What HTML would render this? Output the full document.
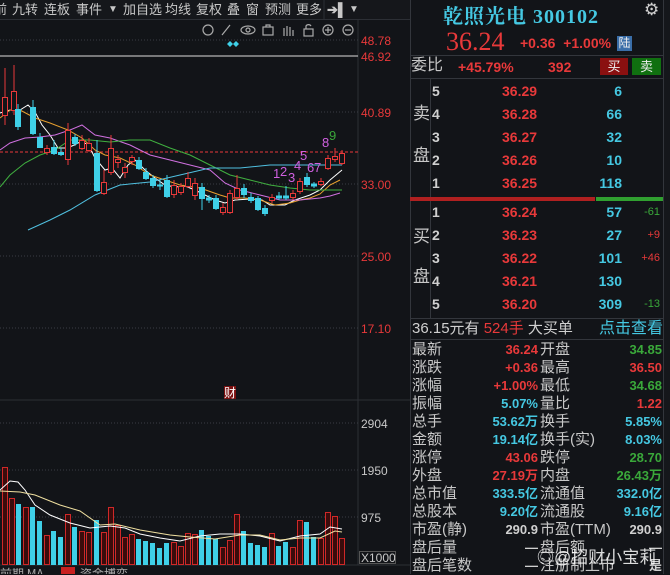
<!DOCTYPE html>
<html><head><meta charset="utf-8"><style>
*{margin:0;padding:0;box-sizing:border-box}
body{width:670px;height:574px;background:#121418;overflow:hidden;position:relative;font-family:"Liberation Sans","Noto Sans CJK SC",sans-serif;color:#c8c8c8}
.a{position:absolute;white-space:nowrap}
.r{color:#e8393a}.c{color:#45c8e2}.g{color:#3aa83a}.w{color:#d0d0d0}
.tb{top:0;left:0;height:20px;width:410px;background:#15171b;border-bottom:1px solid #2c2f35;font-size:13px;line-height:18px;color:#c8c8c8}
.tb span{position:absolute;top:1px}
.lab{font-size:15px;line-height:18px}
.num{font-size:13px;font-weight:bold;line-height:18px}
.ob{font-size:14px;font-weight:bold;line-height:23px}
</style></head><body>
<div class="a tb">
<span style="left:-6px">前</span><span style="left:12px">九转</span><span style="left:44px">连板</span><span style="left:76px">事件</span><span style="left:108px;font-size:10px">▼</span><span style="left:123px">加自选</span><span style="left:165px">均线</span><span style="left:196px">复权</span><span style="left:227px">叠</span><span style="left:246px">窗</span><span style="left:265px">预测</span><span style="left:296px">更多</span><span style="left:327px;font-weight:bold">➔▌</span><span style="left:349px;font-size:10px">▼</span>
</div>
<svg class="a" style="left:0;top:0" width="410" height="574">
<g stroke="#2c2f35" stroke-width="1"><line x1="324" y1="0" x2="324" y2="20"/><line x1="358" y1="20" x2="358" y2="565"/><line x1="0" y1="400" x2="410" y2="400"/><line x1="0" y1="565" x2="410" y2="565"/></g>
<g stroke="#3a3d44" stroke-dasharray="1 2"><line x1="0" y1="40" x2="358" y2="40"/><line x1="0" y1="112" x2="358" y2="112"/><line x1="0" y1="184" x2="358" y2="184"/><line x1="0" y1="256" x2="358" y2="256"/><line x1="0" y1="328" x2="358" y2="328"/><line x1="0" y1="423" x2="358" y2="423"/><line x1="0" y1="470" x2="358" y2="470"/><line x1="0" y1="517" x2="358" y2="517"/></g>
<line x1="0" y1="56" x2="358" y2="56" stroke="#ddd"/>
<line x1="0" y1="152" x2="358" y2="152" stroke="#e8393a" stroke-dasharray="3 2"/>
<g fill="none" stroke="#aaa" stroke-width="1.2"><circle cx="208" cy="30" r="5"/><path d="M222 35l8-10"/><ellipse cx="248" cy="30" rx="7" ry="4"/><circle cx="248" cy="30" r="2"/><rect x="263" y="27" width="10" height="8"/><path d="M266 27v-2h4v2"/><path d="M284 36v-8m3 8v-10m3 10v-9m3 9v-6"/><rect x="304" y="29" width="9" height="7"/><path d="M306 29v-3a3 3 0 0 1 5 0"/><circle cx="328" cy="30" r="5"/><path d="M325 30h6m-3-3v6"/><circle cx="348" cy="30" r="5"/><path d="M345 30h6"/></g>
<g fill="#3fd0e8"><path d="M230 41l3 3-3 3-3-3z"/><path d="M236 41l3 3-3 3-3-3z"/></g>
<g fill="none" stroke-width="1">
<polyline stroke="#fff" points="0,113 10,110 20,110 28,105 35,112 42,125 50,135 58,148 65,148 72,146 80,142 88,144 95,158 105,170 112,168 120,178 128,165 135,160 145,170 155,178 165,185 175,187 185,186 195,190 205,195 215,200 225,203 235,200 250,199 262,200 270,205 285,205 295,200 310,195 320,190 330,180 342,170"/>
<polyline stroke="#e8a030" points="0,118 10,110 20,110 35,118 50,123 68,130 82,138 95,150 105,155 120,158 135,165 150,175 165,180 180,185 200,188 220,195 230,198 245,198 260,200 275,205 290,203 300,200 310,198 320,194 330,185 340,180"/>
<polyline stroke="#d070e0" points="0,150 10,143 25,138 40,137 55,135 70,130 82,125 95,135 110,138 130,145 150,155 170,160 190,165 210,170 225,183 240,190 260,195 280,200 300,200 320,198 330,196 340,193"/>
<polyline stroke="#40b040" points="0,187 10,175 25,163 40,155 55,150 70,140 90,140 110,142 130,140 150,140 170,148 190,155 210,165 230,175 250,180 270,185 290,188 310,190 330,190 342,190"/>
<polyline stroke="#50c0e0" points="28,230 50,220 70,210 95,195 120,185 150,182 180,175 210,168 240,168 270,165 300,165 330,165 342,165"/>
</g>
<g stroke="#e8393a" fill="#121418" stroke-width="1">
<line x1="5" y1="68" x2="5" y2="125"/><rect x="2.5" y="97.5" width="5" height="18"/>
<line x1="14" y1="65" x2="14" y2="115"/><rect x="11.5" y="91.5" width="5" height="19"/>
<line x1="47" y1="145" x2="47" y2="155"/><rect x="44.5" y="148.5" width="5" height="4"/>
<line x1="68" y1="123" x2="68" y2="165"/><rect x="65.5" y="130.5" width="5" height="29"/>
<line x1="82" y1="135" x2="82" y2="150"/><rect x="79.5" y="140.5" width="5" height="8"/>
<line x1="89" y1="138" x2="89" y2="152"/><rect x="86.5" y="143.5" width="5" height="7"/>
<line x1="104" y1="170" x2="104" y2="195"/><rect x="101.5" y="182.5" width="5" height="11"/>
<line x1="111" y1="135" x2="111" y2="175"/><rect x="108.5" y="148.5" width="5" height="24"/>
<line x1="118" y1="155" x2="118" y2="168"/><rect x="115.5" y="159.5" width="5" height="3"/>
<line x1="125" y1="163" x2="125" y2="178"/><rect x="122.5" y="167.5" width="5" height="5"/>
<line x1="132" y1="155" x2="132" y2="165"/><rect x="129.5" y="157.5" width="5" height="4"/>
<line x1="174" y1="180" x2="174" y2="198"/><rect x="171.5" y="185.5" width="5" height="9"/>
<line x1="181" y1="183" x2="181" y2="195"/><rect x="178.5" y="186.5" width="5" height="6"/>
<line x1="188" y1="172" x2="188" y2="188"/><rect x="185.5" y="178.5" width="5" height="8"/>
<line x1="195" y1="178" x2="195" y2="200"/><rect x="192.5" y="183.5" width="5" height="12"/>
<line x1="223" y1="203" x2="223" y2="215"/><rect x="220.5" y="207.5" width="5" height="5"/>
<line x1="230" y1="190" x2="230" y2="214"/><rect x="227.5" y="193.5" width="5" height="19"/>
<line x1="237" y1="175" x2="237" y2="200"/><rect x="234.5" y="188.5" width="5" height="9"/>
<line x1="272" y1="194" x2="272" y2="203"/><rect x="269.5" y="197.5" width="5" height="3"/>
<line x1="293" y1="190" x2="293" y2="200"/><rect x="290.5" y="193.5" width="5" height="4"/>
<line x1="300" y1="178" x2="300" y2="194"/><rect x="297.5" y="181.5" width="5" height="10"/>
<line x1="321" y1="178" x2="321" y2="186"/><rect x="318.5" y="181.5" width="5" height="3"/>
<line x1="328" y1="155" x2="328" y2="170"/><rect x="325.5" y="158.5" width="5" height="10"/>
<line x1="335" y1="148" x2="335" y2="162"/><rect x="332.5" y="156.5" width="5" height="3"/>
<line x1="342" y1="150" x2="342" y2="165"/><rect x="339.5" y="153.5" width="5" height="10"/>
</g>
<g stroke="#3fd0e8" fill="#3fd0e8" stroke-width="1">
<line x1="18" y1="104" x2="18" y2="130"/><rect x="15.5" y="109.5" width="5" height="17"/>
<line x1="33" y1="100" x2="33" y2="135"/><rect x="30.5" y="107.5" width="5" height="26"/>
<line x1="40" y1="133" x2="40" y2="148"/><rect x="37.5" y="137.5" width="5" height="10"/>
<line x1="54" y1="140" x2="54" y2="155"/><rect x="51.5" y="147.5" width="5" height="6"/>
<line x1="61" y1="148" x2="61" y2="156"/><rect x="58.5" y="152.5" width="5" height="2"/>
<line x1="75" y1="134" x2="75" y2="146"/><rect x="72.5" y="137.5" width="5" height="6"/>
<line x1="97" y1="140" x2="97" y2="192"/><rect x="94.5" y="153.5" width="5" height="37"/>
<line x1="139" y1="157" x2="139" y2="170"/><rect x="136.5" y="160.5" width="5" height="8"/>
<line x1="146" y1="168" x2="146" y2="180"/><rect x="143.5" y="172.5" width="5" height="6"/>
<line x1="153" y1="175" x2="153" y2="188"/><rect x="150.5" y="178.5" width="5" height="7"/>
<line x1="160" y1="180" x2="160" y2="190"/><rect x="157.5" y="185" width="5" height="1"/>
<line x1="167" y1="175" x2="167" y2="198"/><rect x="164.5" y="180.5" width="5" height="16"/>
<line x1="202" y1="183" x2="202" y2="210"/><rect x="199.5" y="187.5" width="5" height="11"/>
<line x1="209" y1="195" x2="209" y2="203"/><rect x="206.5" y="198" width="5" height="2"/>
<line x1="216" y1="195" x2="216" y2="210"/><rect x="213.5" y="198.5" width="5" height="10"/>
<line x1="244" y1="184" x2="244" y2="198"/><rect x="241.5" y="188.5" width="5" height="6"/>
<line x1="251" y1="193" x2="251" y2="203"/><rect x="248.5" y="197.5" width="5" height="3"/>
<line x1="258" y1="196" x2="258" y2="211"/><rect x="255.5" y="198.5" width="5" height="11"/>
<line x1="265" y1="205" x2="265" y2="216"/><rect x="262.5" y="208.5" width="5" height="5"/>
<line x1="279" y1="192" x2="279" y2="200"/><rect x="276.5" y="196" width="5" height="2"/>
<line x1="286" y1="186" x2="286" y2="200"/><rect x="283.5" y="196" width="5" height="2"/>
<line x1="307" y1="173" x2="307" y2="187"/><rect x="304.5" y="177.5" width="5" height="7"/>
<line x1="314" y1="182" x2="314" y2="188"/><rect x="311.5" y="184" width="5" height="2"/>
</g>
<g font-family="Liberation Sans" font-size="13"><text x="273" y="178" fill="#d060e0">1</text><text x="280" y="176" fill="#d060e0">2</text><text x="288" y="182" fill="#d060e0">3</text><text x="294" y="170" fill="#d060e0">4</text><text x="300" y="160" fill="#d060e0">5</text><text x="307" y="172" fill="#d060e0">6</text><text x="314" y="172" fill="#d060e0">7</text><text x="322" y="147" fill="#d060e0">8</text><text x="329" y="140" fill="#3aa83a">9</text></g>
<g font-family="Liberation Sans" font-size="12" fill="#e8393a"><text x="361" y="45">48.78</text><text x="361" y="61">46.92</text><text x="361" y="117">40.89</text><text x="361" y="189">33.00</text><text x="361" y="261">25.00</text><text x="361" y="333">17.10</text></g>
<g font-family="Liberation Sans" font-size="12" fill="#c8c8c8"><text x="361" y="428">2904</text><text x="361" y="475">1950</text><text x="361" y="522">975</text><text x="361" y="562">X1000</text></g>
<rect x="359.5" y="551.5" width="36" height="12" fill="none" stroke="#555"/>
<rect x="224" y="386" width="12" height="13" fill="#7a1010"/><text x="224" y="397" font-size="12" fill="#fff" font-family="Noto Sans CJK SC">财</text>
<g stroke="#d02828" fill="#3a0c0c">
<rect x="2.5" y="467.5" width="5" height="97"/><rect x="9.5" y="498.5" width="5" height="66"/><rect x="23.5" y="507.5" width="5" height="57"/><rect x="44.5" y="535.5" width="5" height="29"/><rect x="65.5" y="514.5" width="5" height="50"/><rect x="79.5" y="531.5" width="5" height="33"/><rect x="86.5" y="532.5" width="5" height="32"/><rect x="101.5" y="532.5" width="5" height="32"/><rect x="108.5" y="507.5" width="5" height="57"/><rect x="115.5" y="525.5" width="5" height="39"/><rect x="122.5" y="537.5" width="5" height="27"/><rect x="129.5" y="534.5" width="5" height="30"/><rect x="171.5" y="542.5" width="5" height="22"/><rect x="178.5" y="546.5" width="5" height="18"/><rect x="185.5" y="533.5" width="5" height="31"/><rect x="192.5" y="534.5" width="5" height="30"/><rect x="220.5" y="547.5" width="5" height="17"/><rect x="227.5" y="540.5" width="5" height="24"/><rect x="234.5" y="514.5" width="5" height="50"/><rect x="269.5" y="533.5" width="5" height="31"/><rect x="290.5" y="547.5" width="5" height="17"/><rect x="297.5" y="520.5" width="5" height="44"/><rect x="318.5" y="538.5" width="5" height="26"/><rect x="325.5" y="512.5" width="5" height="52"/><rect x="332.5" y="516.5" width="5" height="48"/><rect x="339.5" y="538.5" width="5" height="26"/>
</g>
<g fill="#3fd0e8">
<rect x="16" y="504" width="5" height="61"/><rect x="30" y="507" width="5" height="58"/><rect x="37" y="521" width="5" height="44"/><rect x="51" y="531" width="5" height="34"/><rect x="58" y="537" width="5" height="28"/><rect x="72" y="527" width="5" height="38"/><rect x="94" y="520" width="5" height="45"/><rect x="136" y="539" width="5" height="26"/><rect x="143" y="541" width="5" height="24"/><rect x="150" y="543" width="5" height="22"/><rect x="157" y="548" width="5" height="17"/><rect x="164" y="543" width="5" height="22"/><rect x="199" y="530" width="5" height="35"/><rect x="206" y="536" width="5" height="29"/><rect x="213" y="539" width="5" height="26"/><rect x="241" y="531" width="5" height="34"/><rect x="248" y="543" width="5" height="22"/><rect x="255" y="545" width="5" height="20"/><rect x="262" y="547" width="5" height="18"/><rect x="276" y="546" width="5" height="19"/><rect x="283" y="542" width="5" height="23"/><rect x="304" y="522" width="5" height="43"/><rect x="311" y="537" width="5" height="28"/>
</g>
<polyline fill="none" stroke="#fff" points="0,490 10,481 18,482 25,490 35,505 50,515 70,523 90,528 110,526 125,528 140,534 160,538 180,541 200,536 220,534 240,534 260,536 280,541 300,536 320,534 330,527 342,529"/>
<polyline fill="none" stroke="#f0e0a0" points="0,491 20,492 35,495 60,505 80,511 100,525 115,524 140,530 170,535 190,537 215,539 240,535 260,535 280,540 300,538 320,538 335,531 342,532"/>
<rect x="0" y="566" width="410" height="8" fill="#121418"/>
<rect x="61" y="567" width="14" height="7" fill="#c82020"/>
<text x="0" y="578" font-size="12" fill="#aaa" font-family="Noto Sans CJK SC">前期 MA</text>
<text x="80" y="578" font-size="12" fill="#aaa" font-family="Noto Sans CJK SC">资金博弈</text>
</svg>
<div class="a" style="left:410px;top:0;width:1px;height:574px;background:#33363c"></div>
<div class="a" style="left:663px;top:0;width:7px;height:574px;background:#15171b;border-left:1px solid #33363c"></div>
<div class="a c" style="left:443px;top:0px;font-size:20px;font-weight:bold;font-family:'Liberation Serif','Noto Serif CJK SC',serif;letter-spacing:1px">乾照光电 300102</div>
<div class="a w" style="left:644px;top:0px;font-size:17px">⚙</div>
<div class="a r" style="left:446px;top:27px;font-size:26px;font-family:'Liberation Serif',serif">36.24</div>
<div class="a r" style="left:520px;top:35px;font-size:14px;font-weight:bold">+0.36&nbsp;&nbsp;+1.00%</div>
<div class="a" style="left:617px;top:36px;width:15px;height:15px;background:#3a6ea8;color:#eee;font-size:12px;line-height:15px;text-align:center">陆</div>
<div class="a" style="left:410px;top:55px;width:254px;height:1px;background:#33363c"></div>
<div class="a lab" style="left:411px;top:57px;font-size:16px">委比</div>
<div class="a r num" style="left:458px;top:58px;font-size:14px">+45.79%</div>
<div class="a r num" style="left:548px;top:58px;font-size:14px">392</div>
<div class="a" style="left:600px;top:58px;width:28px;height:17px;background:#8a1010;color:#eee;font-size:13px;text-align:center;line-height:17px">买</div>
<div class="a" style="left:632px;top:58px;width:29px;height:17px;background:#107010;color:#eee;font-size:13px;text-align:center;line-height:17px">卖</div>
<div class="a" style="left:410px;top:78px;width:254px;height:1px;background:#33363c"></div>
<div class="a" style="left:430px;top:79px;width:1px;height:239px;background:#33363c"></div>
<div class="a lab" style="left:413px;top:105px;font-size:17px">卖</div>
<div class="a lab" style="left:413px;top:147px;font-size:17px">盘</div>
<div class="a lab" style="left:413px;top:228px;font-size:17px">买</div>
<div class="a lab" style="left:413px;top:268px;font-size:17px">盘</div>
<div class="ob" style="position:absolute;left:432px;top:80px;width:230px">
<div style="position:relative;height:23px"><span class="w a" style="left:0">5</span><span class="r a" style="left:70px">36.29</span><span class="c a" style="right:40px">6</span></div>
<div style="position:relative;height:23px"><span class="w a" style="left:0">4</span><span class="r a" style="left:70px">36.28</span><span class="c a" style="right:40px">66</span></div>
<div style="position:relative;height:23px"><span class="w a" style="left:0">3</span><span class="r a" style="left:70px">36.27</span><span class="c a" style="right:40px">32</span></div>
<div style="position:relative;height:23px"><span class="w a" style="left:0">2</span><span class="r a" style="left:70px">36.26</span><span class="c a" style="right:40px">10</span></div>
<div style="position:relative;height:23px"><span class="w a" style="left:0">1</span><span class="r a" style="left:70px">36.25</span><span class="c a" style="right:40px">118</span></div>
</div>
<div class="a" style="left:410px;top:197px;width:185px;height:4px;background:#b02020"></div>
<div class="a" style="left:596px;top:197px;width:67px;height:4px;background:#30a030"></div>
<div class="ob" style="position:absolute;left:432px;top:201px;width:230px">
<div style="position:relative;height:23px"><span class="w a" style="left:0">1</span><span class="r a" style="left:70px">36.24</span><span class="c a" style="right:40px">57</span><span class="g a" style="right:2px;font-size:11px;font-weight:normal">-61</span></div>
<div style="position:relative;height:23px"><span class="w a" style="left:0">2</span><span class="r a" style="left:70px">36.23</span><span class="c a" style="right:40px">27</span><span class="r a" style="right:2px;font-size:11px;font-weight:normal">+9</span></div>
<div style="position:relative;height:23px"><span class="w a" style="left:0">3</span><span class="r a" style="left:70px">36.22</span><span class="c a" style="right:40px">101</span><span class="r a" style="right:2px;font-size:11px;font-weight:normal">+46</span></div>
<div style="position:relative;height:23px"><span class="w a" style="left:0">4</span><span class="r a" style="left:70px">36.21</span><span class="c a" style="right:40px">130</span></div>
<div style="position:relative;height:23px"><span class="w a" style="left:0">5</span><span class="r a" style="left:70px">36.20</span><span class="c a" style="right:40px">309</span><span class="g a" style="right:2px;font-size:11px;font-weight:normal">-13</span></div>
</div>
<div class="a" style="left:410px;top:318px;width:254px;height:1px;background:#33363c"></div>
<div class="a" style="left:412px;top:320px;font-size:15px;line-height:18px"><span class="w">36.15元有</span> <span class="r">524手</span> <span class="w">大买单</span></div>
<div class="a c" style="left:599px;top:320px;font-size:16px;line-height:18px">点击查看</div>
<div class="a" style="left:410px;top:339px;width:254px;height:1px;background:#33363c"></div>
<div style="position:absolute;left:412px;top:341px;width:250px;line-height:18px">
<div style="position:relative;height:18px"><span class="a lab">最新</span><span class="a num r" style="right:124px">36.24</span><span class="a lab" style="left:128px">开盘</span><span class="a num g" style="right:0">34.85</span></div>
<div style="position:relative;height:18px"><span class="a lab">涨跌</span><span class="a num r" style="right:124px">+0.36</span><span class="a lab" style="left:128px">最高</span><span class="a num r" style="right:0">36.50</span></div>
<div style="position:relative;height:18px"><span class="a lab">涨幅</span><span class="a num r" style="right:124px">+1.00%</span><span class="a lab" style="left:128px">最低</span><span class="a num g" style="right:0">34.68</span></div>
<div style="position:relative;height:18px"><span class="a lab">振幅</span><span class="a num c" style="right:124px">5.07%</span><span class="a lab" style="left:128px">量比</span><span class="a num r" style="right:0">1.22</span></div>
<div style="position:relative;height:18px"><span class="a lab">总手</span><span class="a num c" style="right:124px">53.62万</span><span class="a lab" style="left:128px">换手</span><span class="a num c" style="right:0">5.85%</span></div>
<div style="position:relative;height:18px"><span class="a lab">金额</span><span class="a num c" style="right:124px">19.14亿</span><span class="a lab" style="left:128px">换手(实)</span><span class="a num c" style="right:0">8.03%</span></div>
<div style="position:relative;height:18px"><span class="a lab">涨停</span><span class="a num r" style="right:124px">43.06</span><span class="a lab" style="left:128px">跌停</span><span class="a num g" style="right:0">28.70</span></div>
<div style="position:relative;height:18px"><span class="a lab">外盘</span><span class="a num r" style="right:124px">27.19万</span><span class="a lab" style="left:128px">内盘</span><span class="a num g" style="right:0">26.43万</span></div>
<div style="position:relative;height:18px"><span class="a lab">总市值</span><span class="a num c" style="right:124px">333.5亿</span><span class="a lab" style="left:128px">流通值</span><span class="a num c" style="right:0">332.0亿</span></div>
<div style="position:relative;height:18px"><span class="a lab">总股本</span><span class="a num c" style="right:124px">9.20亿</span><span class="a lab" style="left:128px">流通股</span><span class="a num c" style="right:0">9.16亿</span></div>
<div style="position:relative;height:18px"><span class="a lab">市盈(静)</span><span class="a num w" style="right:124px">290.9</span><span class="a lab" style="left:128px">市盈(TTM)</span><span class="a num w" style="right:0">290.9</span></div>
<div style="position:relative;height:18px"><span class="a lab">盘后量</span><span class="a num w" style="right:124px">—</span><span class="a lab" style="left:128px">盘后额</span><span class="a num w" style="right:0">—</span></div>
<div style="position:relative;height:18px"><span class="a lab">盘后笔数</span><span class="a num w" style="right:124px">—</span><span class="a lab" style="left:128px">注册制上市</span><span class="a num w" style="right:0">是</span></div>
</div>
<div class="a" style="left:537px;top:543px;font-size:17px;color:rgba(255,255,255,0.85)">◎@招财小宝莉</div>
</body></html>
